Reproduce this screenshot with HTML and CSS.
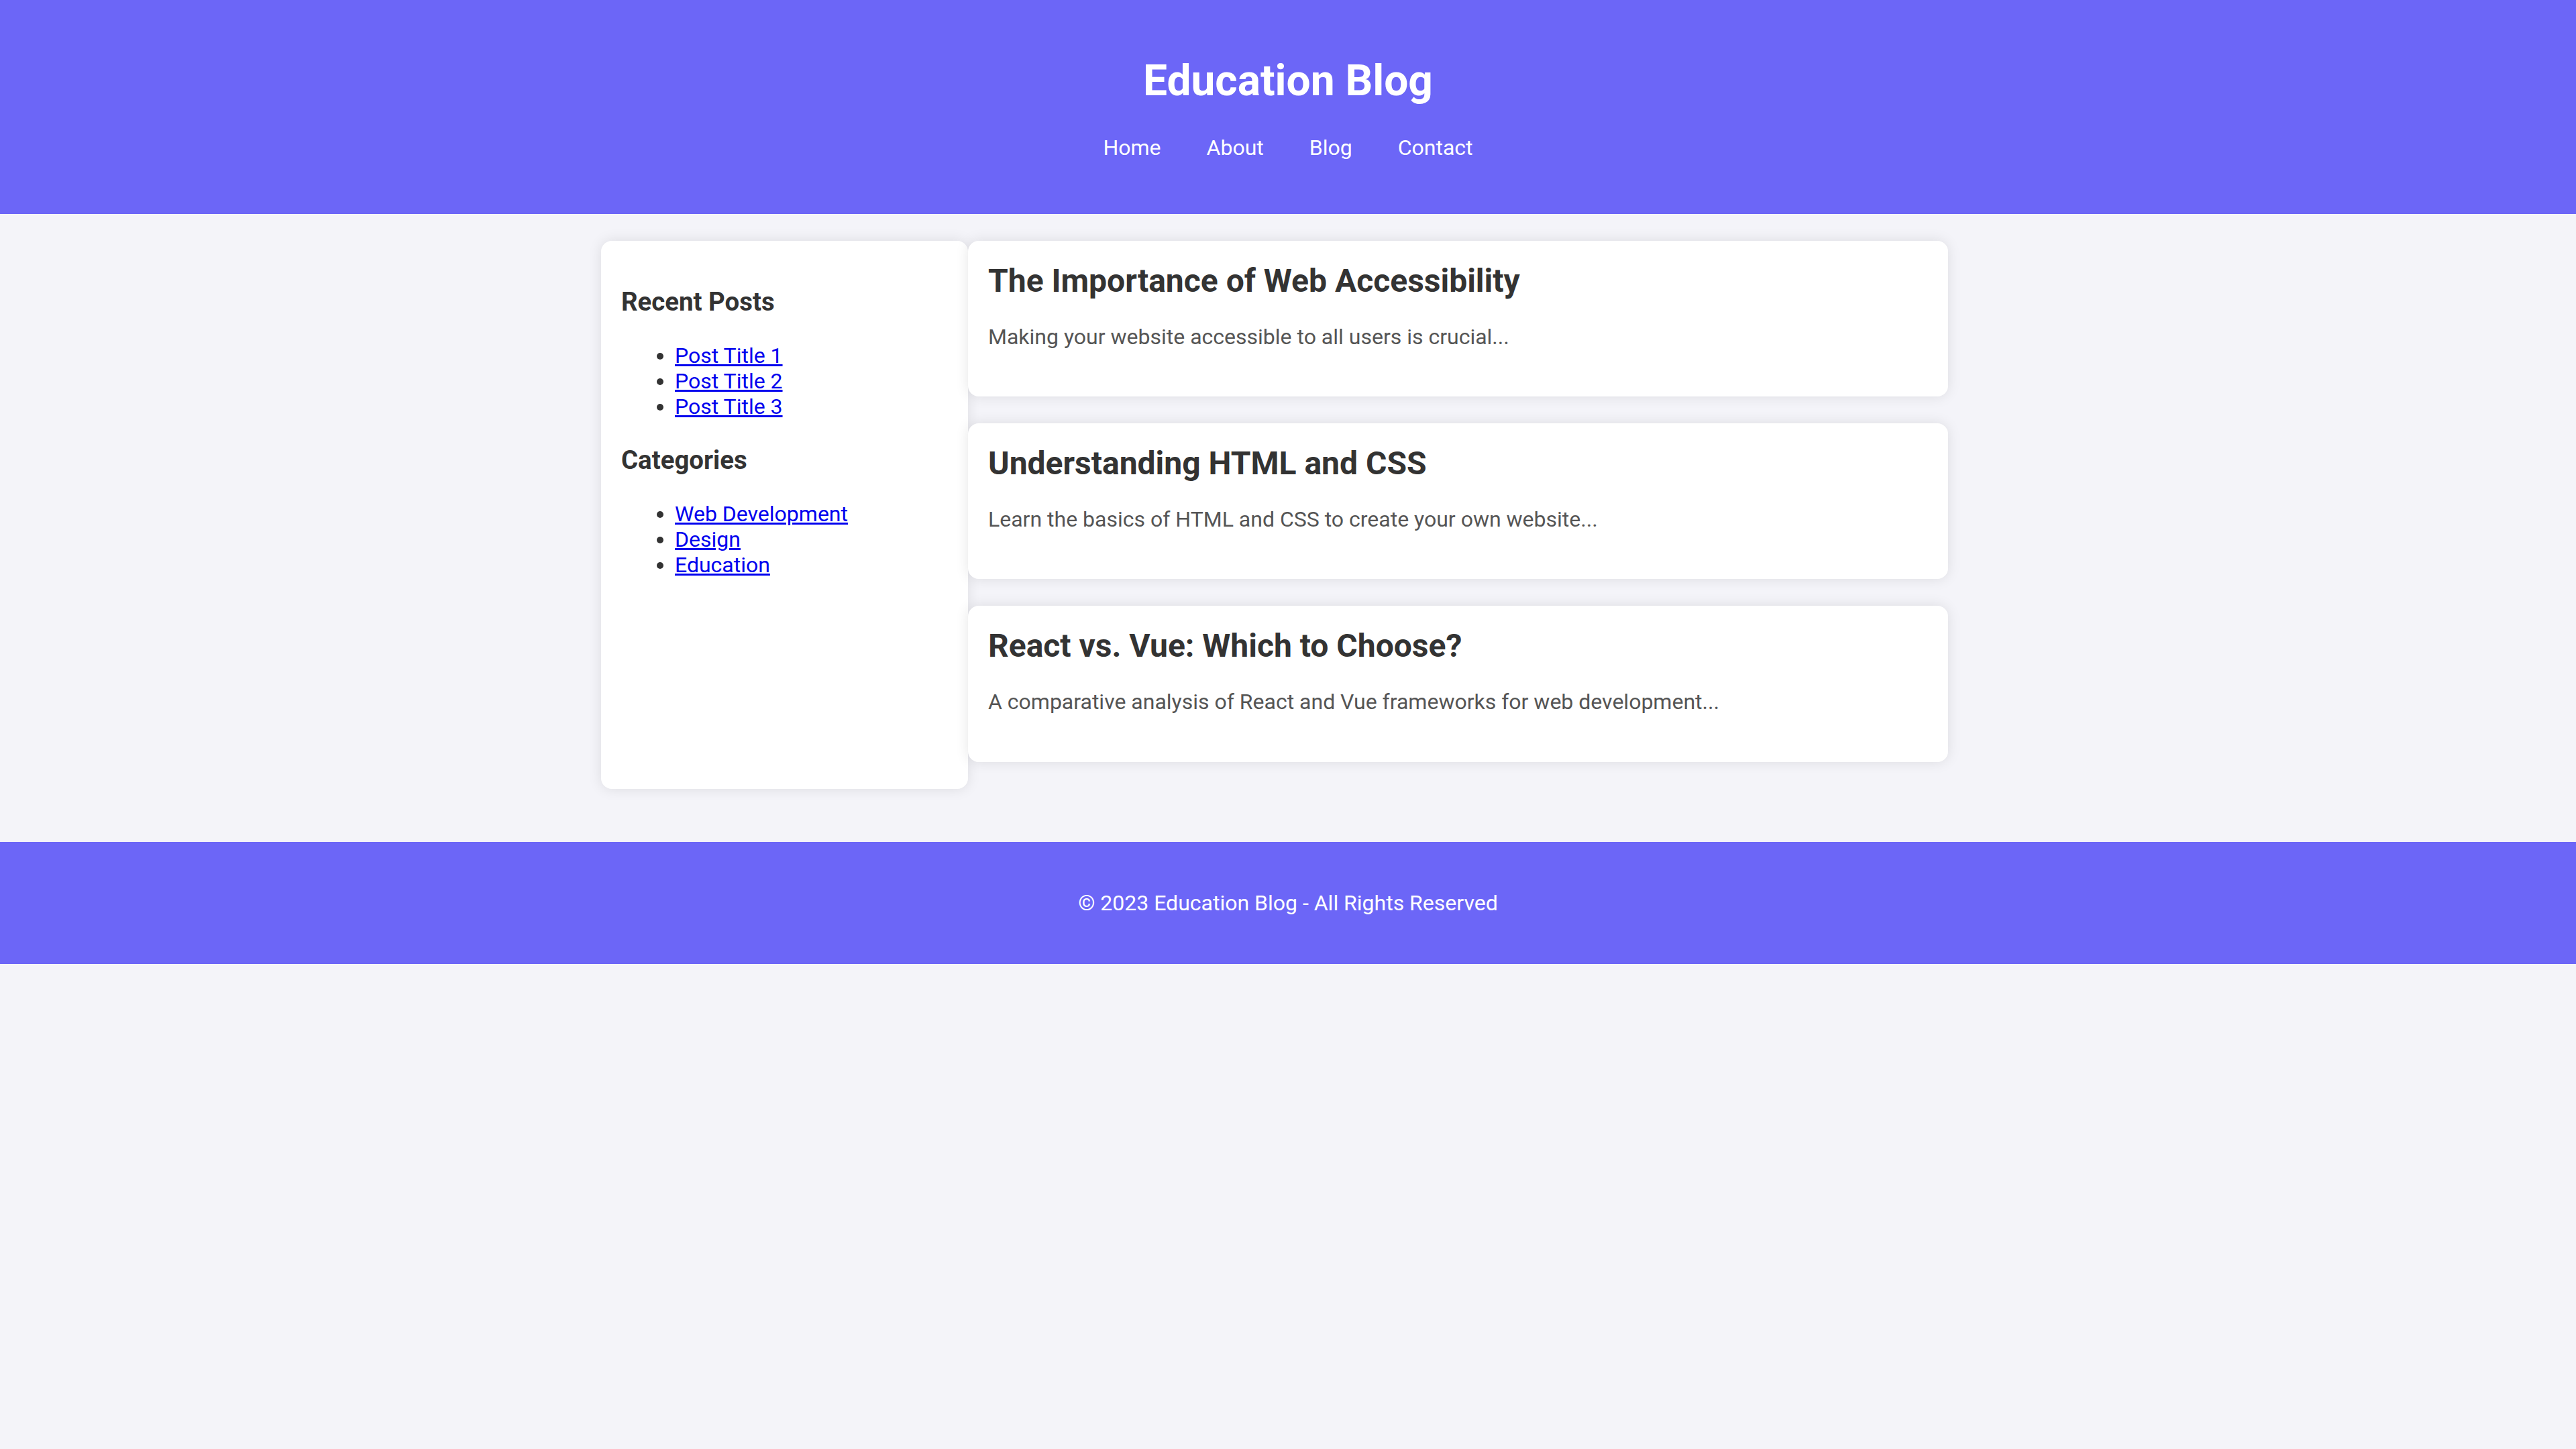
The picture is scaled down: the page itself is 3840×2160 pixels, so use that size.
FILE: index.html
```html
<!DOCTYPE html>
<html lang="en">
<head>
<meta charset="UTF-8">
<title>Education Blog</title>
<link rel="stylesheet" href="styles.css">
</head>
<body>
<header class="site-header">
  <h1 class="site-title">Education Blog</h1>
  <nav class="site-nav">
    <a href="#">Home</a>
    <a href="#">About</a>
    <a href="#">Blog</a>
    <a href="#">Contact</a>
  </nav>
</header>

<div class="container">
  <aside class="sidebar">
    <h3>Recent Posts</h3>
    <ul>
      <li><a href="#">Post Title 1</a></li>
      <li><a href="#">Post Title 2</a></li>
      <li><a href="#">Post Title 3</a></li>
    </ul>
    <h3>Categories</h3>
    <ul>
      <li><a href="#">Web Development</a></li>
      <li><a href="#">Design</a></li>
      <li><a href="#">Education</a></li>
    </ul>
  </aside>

  <main class="posts">
    <article class="post">
      <h2>The Importance of Web Accessibility</h2>
      <p>Making your website accessible to all users is crucial...</p>
    </article>
    <article class="post">
      <h2>Understanding HTML and CSS</h2>
      <p>Learn the basics of HTML and CSS to create your own website...</p>
    </article>
    <article class="post">
      <h2>React vs. Vue: Which to Choose?</h2>
      <p>A comparative analysis of React and Vue frameworks for web development...</p>
    </article>
  </main>
</div>

<footer class="site-footer">
  <p>&copy; 2023 Education Blog - All Rights Reserved</p>
</footer>
</body>
</html>
```

FILE: styles.css
```css
html, body {
  margin: 0;
  padding: 0;
}

body {
  font-family: Roboto, "Liberation Sans", Arial, sans-serif;
  background: #f4f4f9;
  color: #333;
  font-size: 32px;
  min-height: 2160px;
}

.site-header {
  background: #6c66f7;
  color: #fff;
  text-align: center;
  padding: 40px 0;
}

.site-title {
  font-size: 64px;
  font-weight: 700;
  margin: 43px 0;
}

.site-nav {
  display: flex;
  justify-content: center;
  gap: 68px;
  font-size: 32px;
  margin-bottom: 40px;
}

.site-nav a {
  color: #fff;
  text-decoration: none;
}

.container {
  width: 2048px;
  margin: 40px auto 79px;
  display: flex;
  align-items: stretch;
}

.sidebar {
  width: 547px;
  flex: 0 0 547px;
  box-sizing: border-box;
  padding: 30px;
  background: #fff;
  border-radius: 16px;
  box-shadow: 0 0 20px rgba(0, 0, 0, 0.1);
}

.sidebar h3 {
  font-size: 38.4px;
  font-weight: 700;
  margin: 38.4px 0;
}

.sidebar ul {
  margin: 32px 0;
  padding-left: 80px;
}

.sidebar li {
  font-size: 32px;
}

.sidebar a {
  color: #0000ee;
  text-decoration: underline;
}

.posts {
  flex: 1;
  margin-right: 40px;
}

.post {
  background: #fff;
  padding: 30px;
  border-radius: 16px;
  margin-bottom: 40px;
  box-shadow: 0 0 20px rgba(0, 0, 0, 0.1);
}

.post h2 {
  font-size: 48px;
  font-weight: 700;
  line-height: 60px;
  margin: 0 0 28px;
}

.post p {
  font-size: 32px;
  line-height: 51.2px;
  margin: 0 0 33px;
  color: #555;
}

.site-footer {
  background: #6c66f7;
  color: #fff;
  text-align: center;
  padding: 40px 0;
}

.site-footer p {
  margin: 32px 0;
  font-size: 32px;
}
```
